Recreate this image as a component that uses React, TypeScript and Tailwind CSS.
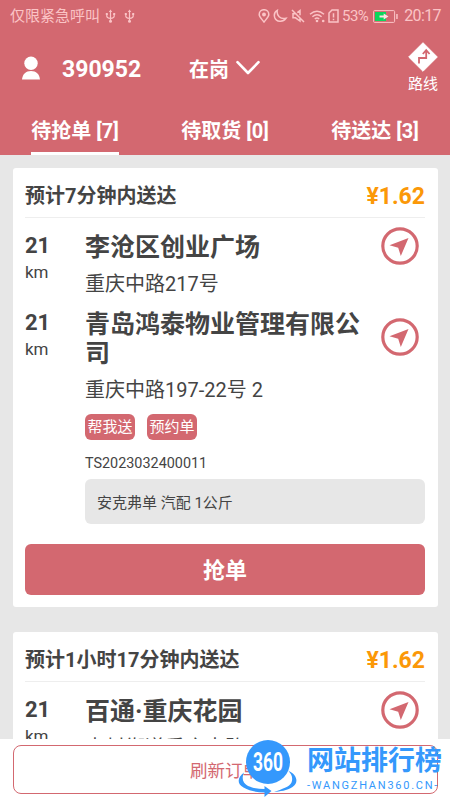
import type { ReactNode } from 'react';

type Stop = { distance: string; name: string; address: string };

type Order = {
  id: string;
  eta: string;
  price: string;
  stops: Stop[];
  tags: string[];
  note: string;
};

const tabs = [
  { label: '待抢单', count: 7 },
  { label: '待取货', count: 0 },
  { label: '待送达', count: 3 },
];

const orders: Order[] = [
  {
    id: 'TS2023032400011',
    eta: '预计7分钟内送达',
    price: '¥1.62',
    stops: [
      { distance: '21', name: '李沧区创业广场', address: '重庆中路217号' },
      { distance: '21', name: '青岛鸿泰物业管理有限公司', address: '重庆中路197-22号 2' },
    ],
    tags: ['帮我送', '预约单'],
    note: '安克弗单 汽配 1公斤',
  },
  {
    id: '',
    eta: '预计1小时17分钟内送达',
    price: '¥1.62',
    stops: [{ distance: '21', name: '百通·重庆花园', address: '李村街道重庆中路' }],
    tags: [],
    note: '',
  },
];

function StatusIcon({ width = 14, children }: { width?: number; children: ReactNode }) {
  return (
    <svg width={width} height="14" viewBox={`0 0 ${width} 14`} fill="none" stroke="currentColor" strokeWidth="1.5">
      {children}
    </svg>
  );
}

function UsbIcon() {
  return (
    <svg width="11" height="14" viewBox="0 0 11 14" fill="none" stroke="currentColor" strokeWidth="1.2">
      <path d="M5.5 2v10M1.8 5v2.2q0 1.6 3.7 2.3M9.2 5v2.2q0 1.6-3.7 2.3" />
      <path d="M3.8 3 5.5.5 7.2 3zM.8 4h2v2h-2zM8.2 4h2v2h-2z" fill="currentColor" stroke="none" />
      <circle cx="5.5" cy="12.2" r="1.5" fill="currentColor" stroke="none" />
    </svg>
  );
}

function StatusBar() {
  return (
    <div className="flex h-8 items-center justify-between pl-2.5 pr-[9px] text-[#fbc4c6]">
      <div className="flex items-center gap-2">
        <span className="-mr-[3px] text-[15px]">仅限紧急呼叫</span>
        <UsbIcon />
        <UsbIcon />
      </div>
      <div className="flex items-center">
        <div className="mr-[3px] flex items-center gap-[3px]">
          <StatusIcon width={12}>
            <path d="M6 13C3.3 9.6 1.2 7.8 1.2 5.5a4.8 4.8 0 0 1 9.6 0C10.8 7.8 8.7 9.6 6 13z" />
            <circle cx="6" cy="5.5" r="1.2" fill="currentColor" />
          </StatusIcon>
          <StatusIcon width={15}>
            <path d="M4.3 1.4C3.3 6.4 7.3 10.6 13 9.3 9.9 13.7 3.2 13 1.7 8.4.8 5.4 2 2.7 4.3 1.4z" />
          </StatusIcon>
          <StatusIcon width={15}>
            <path d="M1 1l12 12M5.5 4.8H2v4h2.5L9 12V8.4M6.3 3.7 9 1.6v4.7" />
          </StatusIcon>
          <StatusIcon width={16}>
            <path d="M1 5.2q7-6 14 0M3.4 7.7q4.6-4 9.2 0M5.8 10q2.2-1.8 4.4 0" />
            <circle cx="8" cy="12" r="1.3" fill="currentColor" stroke="none" />
            <circle cx="14.2" cy="12" r="1.3" fill="currentColor" stroke="none" />
          </StatusIcon>
          <StatusIcon width={11}>
            <path d="M4 1h6v12H1V4zM5.5 4.2v4.2M5.5 9.8v1.5" />
          </StatusIcon>
        </div>
        <span className="text-[15px] tracking-[-0.6px]">53%</span>
        <svg className="ml-[5px] mr-[5px]" width="26" height="13" viewBox="0 0 26 13">
          <rect x=".6" y=".6" width="21" height="11.8" rx="1" fill="none" stroke="currentColor" strokeWidth="1" />
          <path d="M2 2h11v9H2z" fill="#0cd65b" />
          <path d="M6.5 5.6h4.2V3.5l4.8 3-4.8 3V7.4H6.5z" fill="#ffe2e2" />
          <path d="M23.2 4h1.5v5h-1.5z" fill="currentColor" />
        </svg>
        <span className="text-base tracking-[-0.6px]">20:17</span>
      </div>
    </div>
  );
}

function Header() {
  return (
    <header className="h-[155px] shrink-0 bg-[#d36870] text-white">
      <StatusBar />
      <div className="flex h-[75px] items-center pl-[22px] pr-3">
        <svg width="18" height="24" viewBox="0 0 18 24" fill="currentColor" className="-mt-1">
          <circle cx="9" cy="7.2" r="6.7" />
          <path d="M0 23.5c.7-5.6 3.8-8.5 9-8.5s8.3 2.9 9 8.5z" />
        </svg>
        <span className="ml-[22px] w-[127px] pt-0.5 text-[23px] font-bold">390952</span>
        <span className="text-xl font-bold">在岗</span>
        <svg width="24" height="16" viewBox="0 0 24 16" fill="none" stroke="currentColor" strokeWidth="2.6" className="-mt-1 ml-[7px]">
          <path d="M1.5 2.2 12 13 22.5 2.2" strokeLinecap="round" strokeLinejoin="round" />
        </svg>
        <div className="-mt-1 ml-auto flex flex-col items-center">
          <svg width="30" height="30" viewBox="0 0 30 30">
            <path d="M15 .7 29.3 15 15 29.3.7 15z" fill="#fff" stroke="#fff" strokeLinejoin="round" />
            <path d="M11 21.5V16h7.2V9.5M14.8 12l3.4-3.8 3.4 3.8" fill="none" stroke="#d36870" strokeWidth="1.8" />
          </svg>
          <span className="mt-0.5 text-[15px] leading-5">路线</span>
        </div>
      </div>
      <nav className="flex h-12">
        {tabs.map((tab, idx) => (
          <div key={tab.label} className="flex flex-1 justify-center">
            <span className={`h-12 border-b-[3px] text-xl font-bold leading-[49px] ${idx === 0 ? 'border-white' : 'border-transparent'}`}>
              {tab.label} [{tab.count}]
            </span>
          </div>
        ))}
      </nav>
    </header>
  );
}

function NavigateButton() {
  return (
    <button title="导航" className="-mb-3 -mt-4 block">
      <svg width="38" height="38" viewBox="0 0 38 38">
        <circle cx="19" cy="19" r="17.2" fill="none" stroke="#d36870" strokeWidth="3.2" />
        <path d="M27.5 11 19.8 29l-2.6-8.3-8.7-2.4z" fill="#d36870" />
      </svg>
    </button>
  );
}

function StopRow({ stop }: { stop: Stop }) {
  return (
    <div className="flex">
      <div className="w-[60px] shrink-0">
        <p className="text-[22px] font-bold leading-[26px]">{stop.distance}</p>
        <p className="text-[17px] leading-[26px]">km</p>
      </div>
      <div className="flex-1">
        <div className="flex items-center justify-between pr-1.5">
          <p className="w-[280px] text-[25px] font-bold leading-[29px]">{stop.name}</p>
          <NavigateButton />
        </div>
        <p className="mt-2 text-xl leading-7">{stop.address}</p>
      </div>
    </div>
  );
}

function OrderCard({ order }: { order: Order }) {
  return (
    <section className="rounded-[3px] bg-white px-[12.5px] pb-3 text-[#444]">
      <div className="flex h-[50px] items-center justify-between border-b border-[#eee]">
        <h2 className="pt-[7px] text-xl font-bold">{order.eta}</h2>
        <span className="pt-[9px] text-[23px] font-bold text-[#fb9808]">{order.price}</span>
      </div>
      <div className="flex flex-col gap-3 pt-[15px]">
        {order.stops.map((stop) => (
          <StopRow key={stop.name} stop={stop} />
        ))}
      </div>
      {order.tags.length > 0 && (
        <>
          <div className="ml-[60px] mt-2.5">
            <div className="flex gap-3">
              {order.tags.map((tag) => (
                <span key={tag} className="h-[26px] w-[50px] rounded-md bg-[#d36870] text-center text-[15px] leading-[27px] text-white">{tag}</span>
              ))}
            </div>
            <p className="mt-3 text-[14.4px] leading-6">{order.id}</p>
            <p className="mt-[3px] h-[45px] rounded-md bg-[#e7e7e7] pl-3 text-[15px] leading-[48px]">{order.note}</p>
          </div>
          <button className="mt-5 h-[51px] w-full rounded-md bg-[#d36870] pt-0.5 text-[22px] font-bold text-white">抢单</button>
        </>
      )}
    </section>
  );
}

function Watermark() {
  return (
    <div className="absolute bottom-0 right-0 flex h-[62px] w-[212px] text-[#3498fc]">
      <svg width="60" height="60" viewBox="0 0 60 60" className="shrink-0">
        <path d="M6 34.5C-.5 39-1.5 46 5.500 49.500 12 53 19 54.500 26.500 54.500V59L33.500 53l-7-5v3C18 51 9 49 6 44.500 4 41 4.500 37.500 6 34.500z" fill="currentColor" />
        <path d="M50.500 33c8 3 11 11.500 4 16C49 52.500 42 53.500 36 54c8-3 15.500-5 17.500-9.500 1.500-4 .5-8-3-11.500z" fill="currentColor" />
        <circle cx="30" cy="24" r="22" fill="currentColor" />
        <text x="30" y="33" textAnchor="middle" textLength="30" lengthAdjust="spacingAndGlyphs" fill="#fff" fontFamily="Roboto" fontWeight="700" fontSize="25">360</text>
      </svg>
      <div className="ml-[9px] mt-1.5 whitespace-nowrap">
        <p className="text-[27px] font-bold leading-[34px]">网站排行榜</p>
        <p className="text-[11px] leading-4 tracking-[1.75px]">-WANGZHAN360.CN-</p>
      </div>
    </div>
  );
}

export default function App() {
  return (
    <div className="relative flex h-[800px] w-[450px] flex-col overflow-hidden bg-[#e7e7e7] font-[Roboto,'Noto_Sans_CJK_SC',sans-serif]">
      <Header />
      <main className="flex min-h-0 flex-1 flex-col gap-[25px] overflow-hidden px-[12.5px] pt-[13px]">
        {orders.map((order) => (
          <OrderCard key={order.eta} order={order} />
        ))}
      </main>
      <footer className="h-[61px] shrink-0 bg-white px-[12.5px] pt-1.5">
        <button className="h-[49px] w-full rounded-lg border border-[#d36870] pt-[3px] text-[17.5px] text-[#d36870]">刷新订单</button>
      </footer>
      <Watermark />
    </div>
  );
}
